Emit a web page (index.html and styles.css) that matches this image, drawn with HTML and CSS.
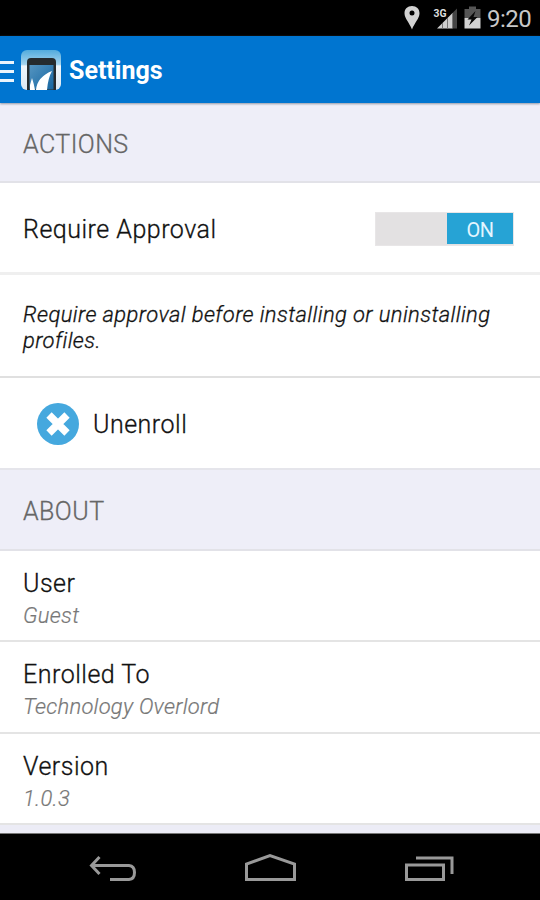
FILE: index.html
```html
<!DOCTYPE html>
<html lang="en">
<head>
<meta charset="utf-8">
<title>Settings</title>
<link rel="stylesheet" href="styles.css">
</head>
<body>
<div class="screen">
  <div class="status">
    <svg class="status-icons" width="90" height="36" viewBox="0 0 90 36">
      <path fill="#d2d2d2" fill-rule="evenodd" d="M12 6C7.500 6 4.500 9 4.500 13.300C4.500 18.500 9.500 23 12 29.500C14.500 23 19.500 18.500 19.500 13.300C19.500 9 16.500 6 12 6ZM12 10.400A2.500 2.500 0 1 1 12 15.400A2.500 2.500 0 1 1 12 10.400Z"/>
      <path fill="#444" d="M57 8.500V28.500H52V13.500Z"/>
      <path fill="#cfcfcf" d="M52 13.500V28.500H37Z"/>
      <path stroke="#777" stroke-width="1" d="M42.500 23V28.500M47.500 18V28.500M52.500 13V28.500"/>
      <text class="network" x="33.500" y="16.500" textLength="13" lengthAdjust="spacingAndGlyphs">3G</text>
      <path fill="#555" d="M69 6.500H76V9H80.500V18H64.500V9H69Z"/>
      <path fill="#d2d2d2" d="M64.500 18H80.500V28.500H64.500Z"/>
      <path fill="#080808" d="M75.500 11L67.500 19.500H71.500L69 25.500L77.500 17H73.500Z"/>
    </svg>
    <span class="clock">9:20</span>
  </div>
  <header class="bar">
    <span class="menu"><i></i><i></i><i></i></span>
    <svg class="logo" width="40" height="41" viewBox="0 0 40 41">
      <defs>
        <linearGradient id="sky" x1="0" y1="0" x2="0" y2="1"><stop offset="0" stop-color="#52abdc"/><stop offset=".36" stop-color="#a5d4ee"/><stop offset=".4" stop-color="#eff6fb"/><stop offset="1" stop-color="#dce9f4"/></linearGradient>
        <linearGradient id="glass" x1="0" y1="0" x2="1" y2="1"><stop offset="0" stop-color="#5595c1"/><stop offset="1" stop-color="#1565a0"/></linearGradient>
      </defs>
      <rect width="40" height="40" rx="6" fill="url(#sky)"/>
      <path fill="#252b2e" d="M6 40V12Q6 8 10 8H31Q35 8 35 12V40Z"/>
      <path fill="url(#glass)" d="M8.500 15H32.500V39.500H8.500Z"/>
      <path fill="#fff" d="M9 40V35L11 28Q13 34 14 40ZM15 40Q16 27 31 21Q27 28 26 40Z"/>
    </svg>
    <h1>Settings</h1>
  </header>
  <main>
    <h2>ACTIONS</h2>
    <div class="row approval"><span class="label approve-label">Require Approval</span><span class="switch"><b>ON</b></span></div>
    <p>Require approval before installing or uninstalling<br>profiles.</p>
    <div class="row unenroll">
      <svg width="42" height="42" viewBox="0 0 42 42"><circle cx="21" cy="21" r="21" fill="#45a8de"/><path d="M12 12L30 30M30 12L12 30" stroke="#fff" stroke-width="7.500"/></svg>
      <span class="label">Unenroll</span>
    </div>
    <h2 class="about">ABOUT</h2>
    <div class="item"><span class="label">User</span><span class="value">Guest</span></div>
    <div class="item"><span class="label">Enrolled To</span><span class="value">Technology Overlord</span></div>
    <div class="item"><span class="label">Version</span><span class="value">1.0.3</span></div>
  </main>
  <nav>
    <svg width="540" height="67" viewBox="0 0 540 67" fill="none" stroke="#999" stroke-width="3">
      <path d="M99.500 24L91.500 32.500L99.500 41M92 32.500H129Q134.500 33 134.500 39.500Q134.500 46 129 46.500H110"/>
      <path d="M246.500 46.500V31L270 22.500L294.500 31V46.500Z"/>
      <path d="M406.500 32H443.500V46.500H406.500ZM416 25H452V41"/>
    </svg>
  </nav>
</div>
</body>
</html>
```

FILE: styles.css
```css
* { box-sizing: border-box; }
body { margin: 0; font-family: Roboto, sans-serif; background: #000; }
.screen { width: 540px; height: 900px; display: flex; flex-direction: column; overflow: hidden; }
.status { height: 36px; background: #000; display: flex; justify-content: flex-end; align-items: center; padding-right: 8px; color: #c8c8c8; }
.status-icons { margin-right: -3px; }
.network { font-size: 11px; font-weight: 700; fill: #ddd; stroke: #000; stroke-width: 2px; paint-order: stroke; }
.clock { width: 45px; font-size: 24px; line-height: 36px; letter-spacing: -.5px; white-space: nowrap; padding-top: 2px; }
.bar { height: 67px; background: #0075d0; display: flex; align-items: center; color: #fff; box-shadow: 0 1px 2px #9298a6; position: relative; }
.menu { width: 14px; height: 21px; display: flex; flex-direction: column; justify-content: space-between; margin-right: 7px; margin-top: 3px; }
.menu i { height: 3px; background: #eaf4fc; }
.logo { margin-top: 1px; }
h1 { margin: 3px 0 0 8px; font-size: 25px; line-height: 34px; font-weight: 700; letter-spacing: 0; }
main { height: 730px; background: #ececf6; }
h2 { height: 80px; margin: 0; padding: 4px 23px 0; background: #eeeef8; border-bottom: 2px solid #e2e2e8; font-size: 25px; line-height: 76px; font-weight: 300; color: #666; letter-spacing: .45px; -webkit-text-stroke: .3px #666; }
.about { height: 81px; }
.row { display: flex; align-items: center; background: #fff; }
.approval { height: 92px; padding: 2px 26px 0 23px; justify-content: space-between; border-bottom: 3px solid #efefef; }
.label { font-size: 25px; line-height: 32px; font-weight: 300; color: #111; letter-spacing: .5px; -webkit-text-stroke: .3px #111; }
.approve-label { padding-top: 3px; }
.switch { width: 139px; height: 34px; background: #e3e1e2; display: flex; justify-content: flex-end; border: 1px solid #e8e6e7; }
.switch b { width: 66px; height: 31px; background: #26a3d5; color: #e3f5ff; font-size: 20px; line-height: 34px; font-weight: 400; text-align: center; letter-spacing: -.4px; }
p { height: 103px; margin: 0; padding: 27px 23px; background: #fff; border-bottom: 2px solid #e0e0e0; font-size: 22px; line-height: 26px; font-style: italic; font-weight: 300; color: #111; letter-spacing: .4px; -webkit-text-stroke: .3px #111; white-space: nowrap; }
.unenroll { height: 92px; padding: 1px 37px 0; gap: 14px; border-bottom: 2px solid #e5e5eb; }
.unenroll .label { padding-top: 2px; }
.item { height: 91px; display: flex; flex-direction: column; background: #fff; border-bottom: 2px solid #e4e4e4; padding: 17px 23px 0; }
.item + .item { height: 91.500px; }
.value { font-size: 22px; line-height: 32px; font-style: italic; font-weight: 300; color: #777; letter-spacing: .25px; -webkit-text-stroke: .2px #777; }
nav { height: 67px; background: #000; border-top: 1px solid #777; }
nav svg { display: block; margin-top: -1px; }
```
